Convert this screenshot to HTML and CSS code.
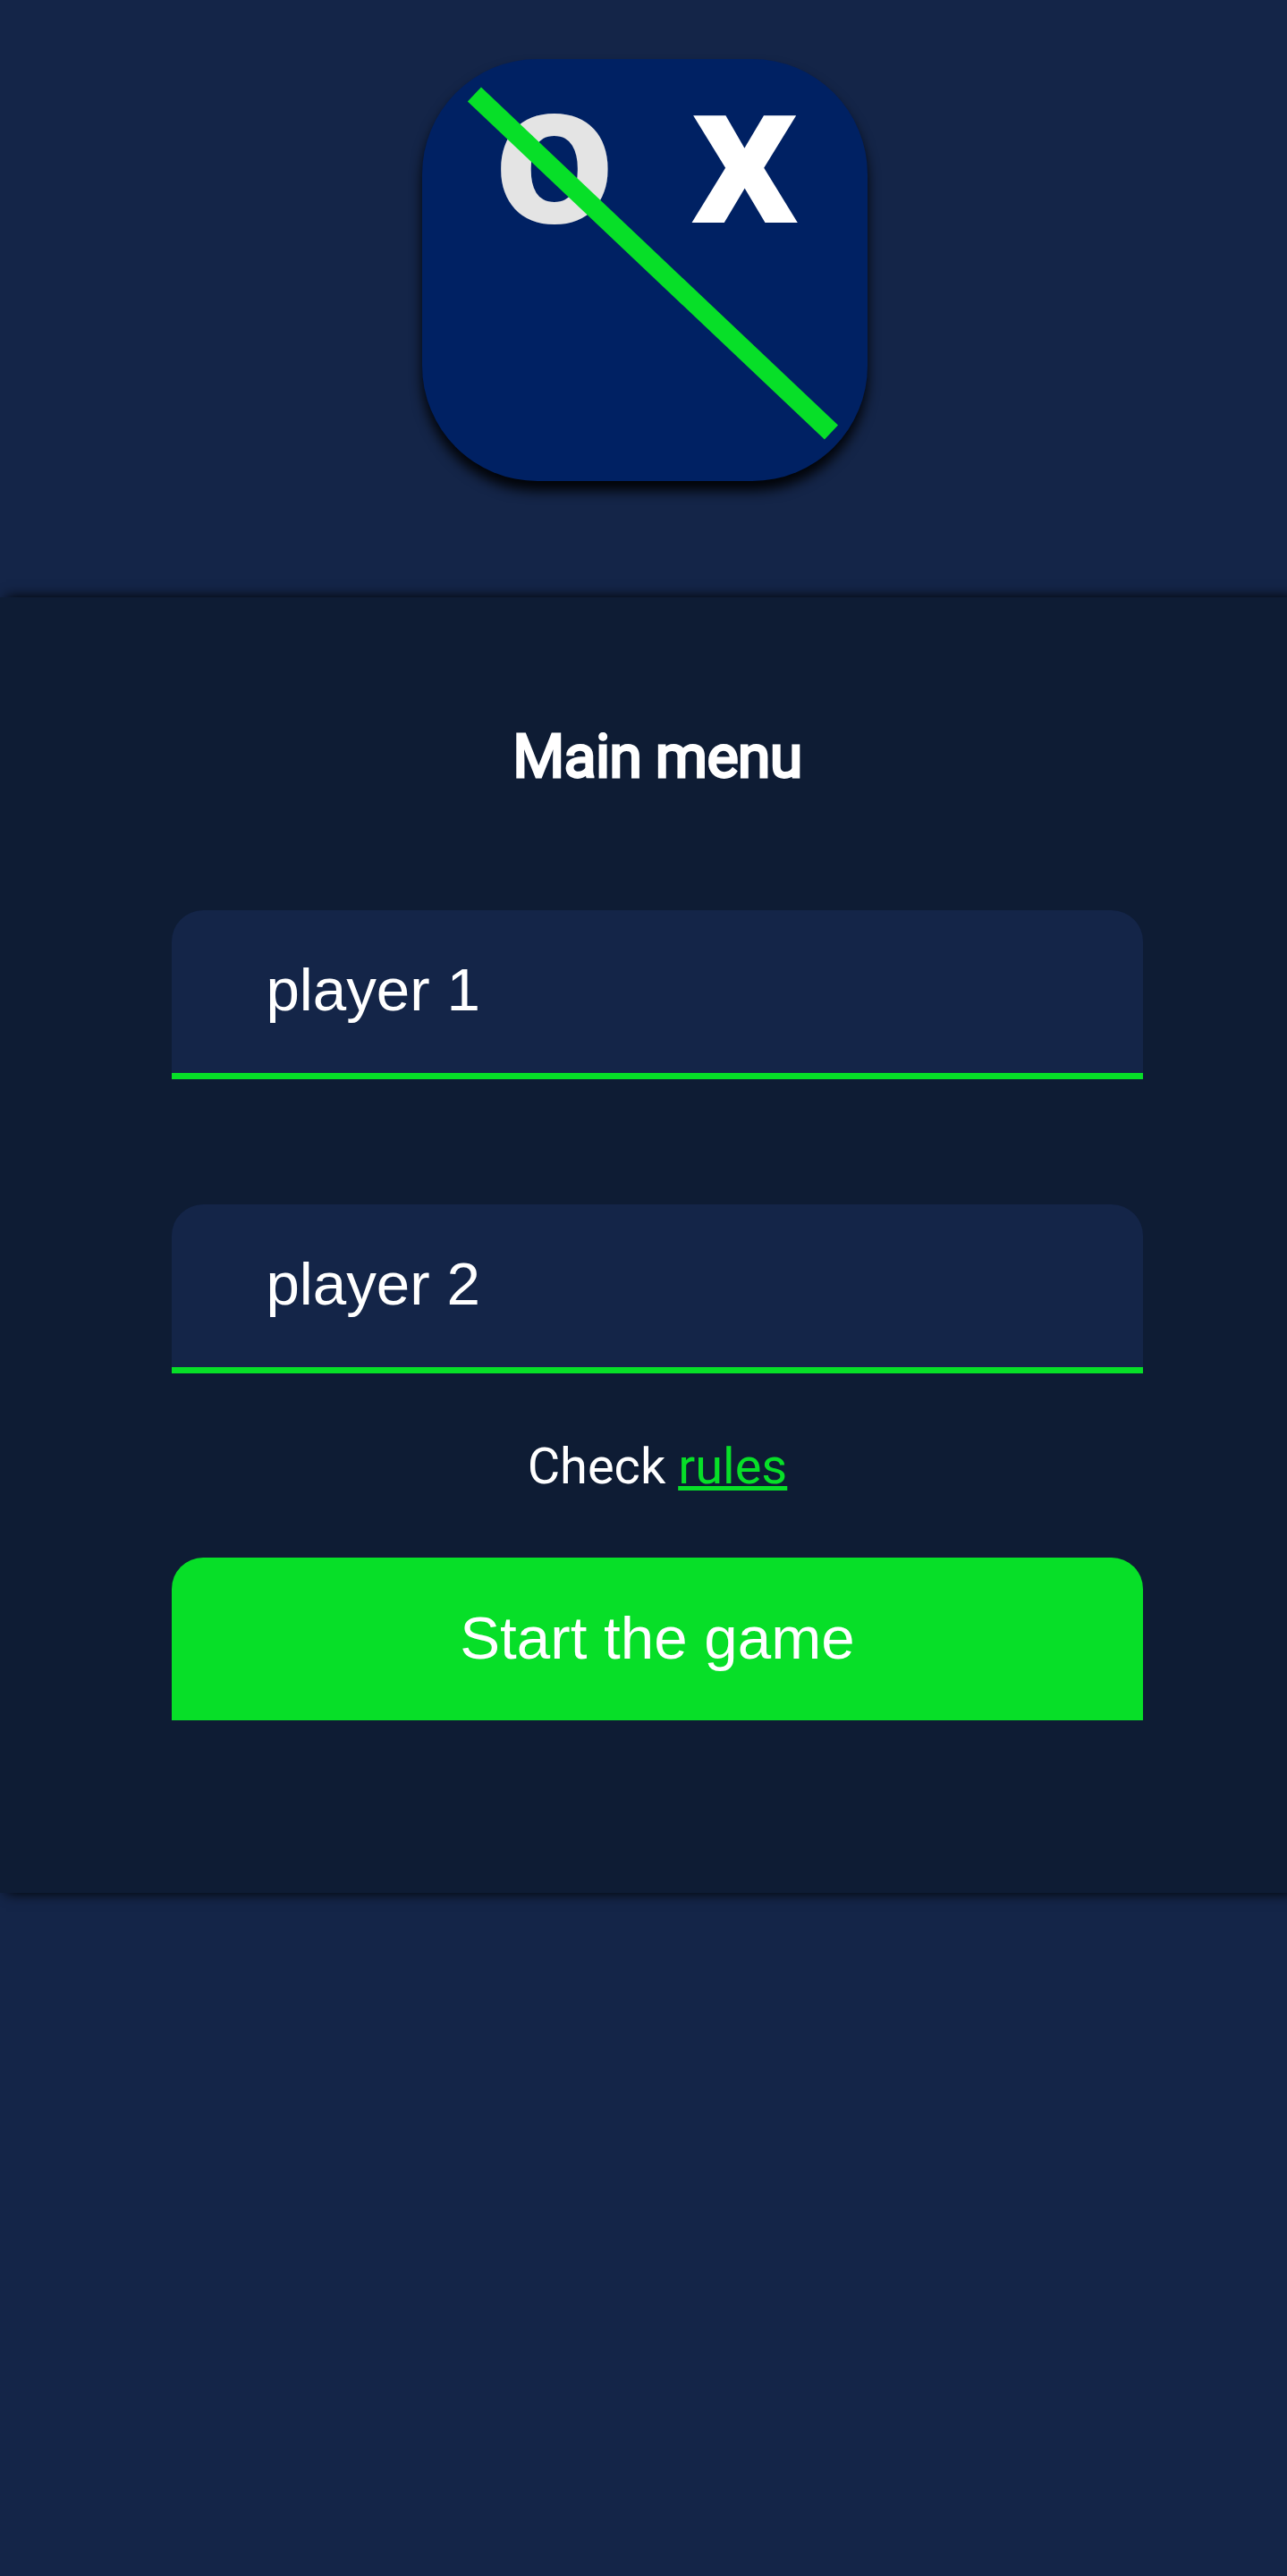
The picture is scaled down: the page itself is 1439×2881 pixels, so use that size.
FILE: index.html
```
<!DOCTYPE html>
<html lang="en">
<head>
<meta charset="utf-8">
<title>Tic Tac Toe</title>
<link rel="stylesheet" href="styles.css">
</head>
<body>
<header class="header">
  <svg class="logo" viewBox="0 0 498.6 471.6" role="img" aria-label="O X">
    <text class="logo-o" transform="translate(147.7 183) scale(1.05 1)">o</text>
    <text class="logo-x" transform="translate(360.3 182.6) scale(1.06 1)">x</text>
    <line class="logo-line" x1="58.4" y1="39.6" x2="457.5" y2="417.5"/>
  </svg>
</header>
<main class="menu">
  <h1 class="title">Main menu</h1>
  <form class="form">
    <input class="field" type="text" placeholder="player 1">
    <input class="field" type="text" placeholder="player 2">
    <p class="rules">Check <a class="link" href="#">rules</a></p>
    <button class="start" type="button">Start the game</button>
  </form>
</main>
</body>
</html>
```
FILE: styles.css
```
* { box-sizing: border-box; }
body {
  margin: 0;
  min-height: 2881px;
  background: #142548;
  color: #fff;
  font-family: Roboto, sans-serif;
}
.header {
  display: flex;
  justify-content: center;
  height: 667.5px;
  padding: 66px 0 0 3px;
}
.logo {
  width: 498.6px;
  height: 471.6px;
  border-radius: 129px;
  background: #002163;
  box-shadow: 0 10.5px 14px rgba(0, 0, 0, 0.9);
}
.logo-o, .logo-x {
  font: 700 227px Roboto, sans-serif;
  fill: #fff;
  text-anchor: middle;
}
.logo-o { fill: #e4e4e4; }
.logo-line { stroke: #07df28; stroke-width: 22; }
.menu {
  height: 1449.5px;
  padding: 137.5px 161.5px 0 192.4px;
  background: #0e1c34;
  box-shadow: 7px 0 14px #000;
}
.title {
  margin: 0;
  font-size: 66.5px;
  font-weight: 400;
  line-height: 82px;
  letter-spacing: -0.8px;
  text-align: center;
  -webkit-text-stroke: 2.8px #fff;
}
.form {
  display: flex;
  flex-direction: column;
  padding-top: 130.5px;
}
.field {
  height: 189px;
  margin: 0 0 140px;
  padding: 0 105px 5px;
  border: 0;
  border-bottom: 7px solid #07df28;
  border-radius: 35px 35px 0 0;
  background: #142548;
  color: #fff;
  font: 67.3px "Liberation Sans", Arial, sans-serif;
}
.field + .field { margin-bottom: 70px; }
.field::placeholder { color: #fff; opacity: 1; }
.rules {
  margin: 0 0 68.4px;
  font-size: 56px;
  line-height: 68px;
  text-align: center;
}
.link { color: #07df28; }
.start {
  height: 182.5px;
  padding: 0 0 4px;
  border: 0;
  border-radius: 35px 35px 0 0;
  background: #07df28;
  color: #fff;
  font: 67.3px "Liberation Sans", Arial, sans-serif;
}
```
